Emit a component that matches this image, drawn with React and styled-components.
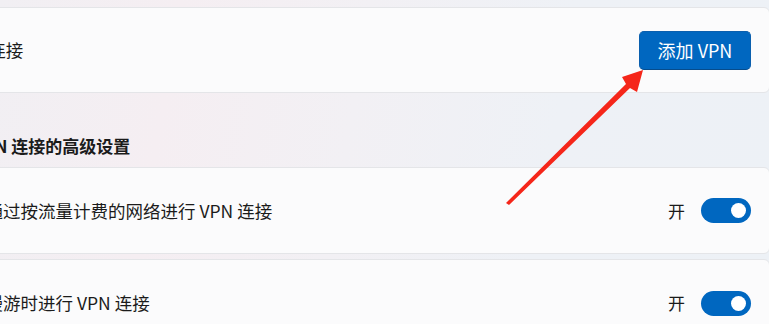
import React from "react";
import styled, { createGlobalStyle } from "styled-components";

const GlobalStyle = createGlobalStyle`
  html, body { margin: 0; padding: 0; }
  body {
    overflow: hidden;
    background: #eef1f5;
    font-family: "Noto Sans CJK SC", "Noto Sans", sans-serif;
    -webkit-font-smoothing: antialiased;
  }
`;

const Page = styled.div`
  position: relative;
  width: 769px;
  height: 324px;
  overflow: hidden;
  background: linear-gradient(100deg, #f1eff3 0%, #f5eef2 22%, #f2f0f4 45%, #eef1f6 70%, #edf1f6 100%);
`;

const Content = styled.div`
  display: flex;
  flex-direction: column;
  width: 836px;
  margin-left: -66px;
  padding-top: 7px;
`;

const Card = styled.div`
  display: flex;
  align-items: center;
  justify-content: space-between;
  box-sizing: border-box;
  height: ${(p) => p.$h}px;
  margin-top: ${(p) => p.$gap || 0}px;
  padding: 0 18px 0 15.5px;
  background: #fbfbfc;
  border: 1px solid #e4e5e8;
  border-radius: 6px;
`;

const Label = styled.span`
  font-size: 17.5px;
  line-height: 22px;
  color: #1b1b1b;
  white-space: nowrap;
`;

const Heading = styled.div`
  box-sizing: border-box;
  height: 74px;
  display: flex;
  align-items: flex-end;
  padding: 0 0 11px 1px;
  font-size: 17px;
  line-height: 20px;
  font-weight: 600;
  color: #1b1b1b;
  white-space: nowrap;
`;

const AccentButton = styled.button`
  width: 112px;
  height: 39px;
  border: 1px solid #0a5fae;
  border-bottom-color: #064c8c;
  border-radius: 5px;
  background: #0067c0;
  color: #ffffff;
  font-family: inherit;
  font-size: 18px;
  line-height: 20px;
  padding: 0 0 1px;
  cursor: pointer;
`;

const ToggleGroup = styled.div`
  display: flex;
  align-items: center;
  gap: 16px;
`;

const StateText = styled.span`
  font-size: 17px;
  line-height: 20px;
  color: #1b1b1b;
`;

const Track = styled.div`
  position: relative;
  width: 50px;
  height: 25px;
  border-radius: 13px;
  background: #0067c0;
`;

const Knob = styled.span`
  position: absolute;
  top: 5px;
  right: 5px;
  width: 15px;
  height: 15px;
  border-radius: 50%;
  background: #ffffff;
`;

const Overlay = styled.svg`
  position: absolute;
  left: 0;
  top: 0;
  pointer-events: none;
`;

function Toggle() {
  return (
    <ToggleGroup>
      <StateText>开</StateText>
      <Track>
        <Knob />
      </Track>
    </ToggleGroup>
  );
}

export default function App() {
  return (
    <>
      <GlobalStyle />
      <Page>
        <Content>
          <Card $h={86}>
            <Label>VPN 连接</Label>
            <AccentButton>添加 VPN</AccentButton>
          </Card>
          <Heading>所有 VPN 连接的高级设置</Heading>
          <Card $h={87}>
            <Label>允许通过按流量计费的网络进行 VPN 连接</Label>
            <Toggle />
          </Card>
          <Card $h={88} $gap={5}>
            <Label>允许漫游时进行 VPN 连接</Label>
            <Toggle />
          </Card>
        </Content>
        <Overlay width="769" height="324" viewBox="0 0 769 324">
          <polygon
            points="506,203 509,205 630,88 637,92 643,70 622,77 626,84"
            fill="#f5261a"
          />
        </Overlay>
      </Page>
    </>
  );
}
